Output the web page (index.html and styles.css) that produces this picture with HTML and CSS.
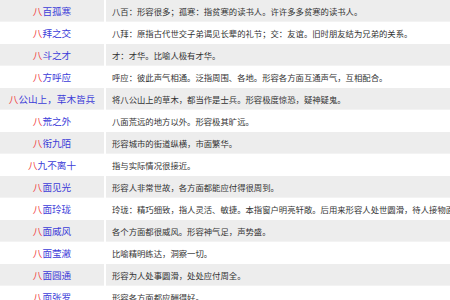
FILE: index.html
```html
<!DOCTYPE html>
<html lang="zh-CN">
<head>
<meta charset="utf-8">
<title>八字开头的成语</title>
<link rel="stylesheet" href="styles.css">
</head>
<body>
<div class="list">
  <div class="row"><div class="word"><span class="ba">八</span>百孤寒</div><div class="desc">八百：形容很多；孤寒：指贫寒的读书人。许许多多贫寒的读书人。</div></div>
  <div class="row"><div class="word"><span class="ba">八</span>拜之交</div><div class="desc">八拜：原指古代世交子弟谒见长辈的礼节；交：友谊。旧时朋友结为兄弟的关系。</div></div>
  <div class="row"><div class="word"><span class="ba">八</span>斗之才</div><div class="desc">才：才华。比喻人极有才华。</div></div>
  <div class="row"><div class="word"><span class="ba">八</span>方呼应</div><div class="desc">呼应：彼此声气相通。泛指周围、各地。形容各方面互通声气，互相配合。</div></div>
  <div class="row"><div class="word"><span class="ba">八</span>公山上，草木皆兵</div><div class="desc">将八公山上的草木，都当作是士兵。形容极度惊恐，疑神疑鬼。</div></div>
  <div class="row"><div class="word"><span class="ba">八</span>荒之外</div><div class="desc">八面荒远的地方以外。形容极其旷远。</div></div>
  <div class="row"><div class="word"><span class="ba">八</span>衔九陌</div><div class="desc">形容城市的街道纵横，市面繁华。</div></div>
  <div class="row"><div class="word"><span class="ba">八</span>九不离十</div><div class="desc">指与实际情况很接近。</div></div>
  <div class="row"><div class="word"><span class="ba">八</span>面见光</div><div class="desc">形容人非常世故，各方面都能应付得很周到。</div></div>
  <div class="row"><div class="word"><span class="ba">八</span>面玲珑</div><div class="desc">玲珑：精巧细致，指人灵活、敏捷。本指窗户明亮轩敞。后用来形容人处世圆滑，待人接物面面俱到。</div></div>
  <div class="row"><div class="word"><span class="ba">八</span>面威风</div><div class="desc">各个方面都很威风。形容神气足，声势盛。</div></div>
  <div class="row"><div class="word"><span class="ba">八</span>面莹澈</div><div class="desc">比喻精明练达，洞察一切。</div></div>
  <div class="row"><div class="word"><span class="ba">八</span>面圆通</div><div class="desc">形容为人处事圆滑，处处应付周全。</div></div>
  <div class="row"><div class="word"><span class="ba">八</span>面张罗</div><div class="desc">形容各方面都应酬得好。</div></div>
</div>
</body>
</html>
```

FILE: styles.css
```css
html, body {
  margin: 0;
  padding: 0;
  background: #ffffff;
  overflow: hidden;
}
body {
  font-family: "Noto Sans CJK SC", "Noto Sans", sans-serif;
}
.list {
  display: flex;
  flex-direction: column;
  width: 700px;
}
.row {
  display: grid;
  grid-template-columns: 104px 1fr;
  column-gap: 2px;
  height: 22px;
}
.row:nth-child(odd) .word,
.row:nth-child(odd) .desc {
  background: #ededed;
  box-shadow: inset 0 -1px 0 #f3f3f3;
}
.word {
  display: flex;
  align-items: center;
  justify-content: center;
  font-size: 9.6px;
  color: #3c3cd8;
  white-space: nowrap;
}
.ba {
  color: #f03c3c;
}
.desc {
  display: flex;
  align-items: center;
  padding-left: 6px;
  font-size: 8.35px;
  color: #333333;
  white-space: nowrap;
}
```
